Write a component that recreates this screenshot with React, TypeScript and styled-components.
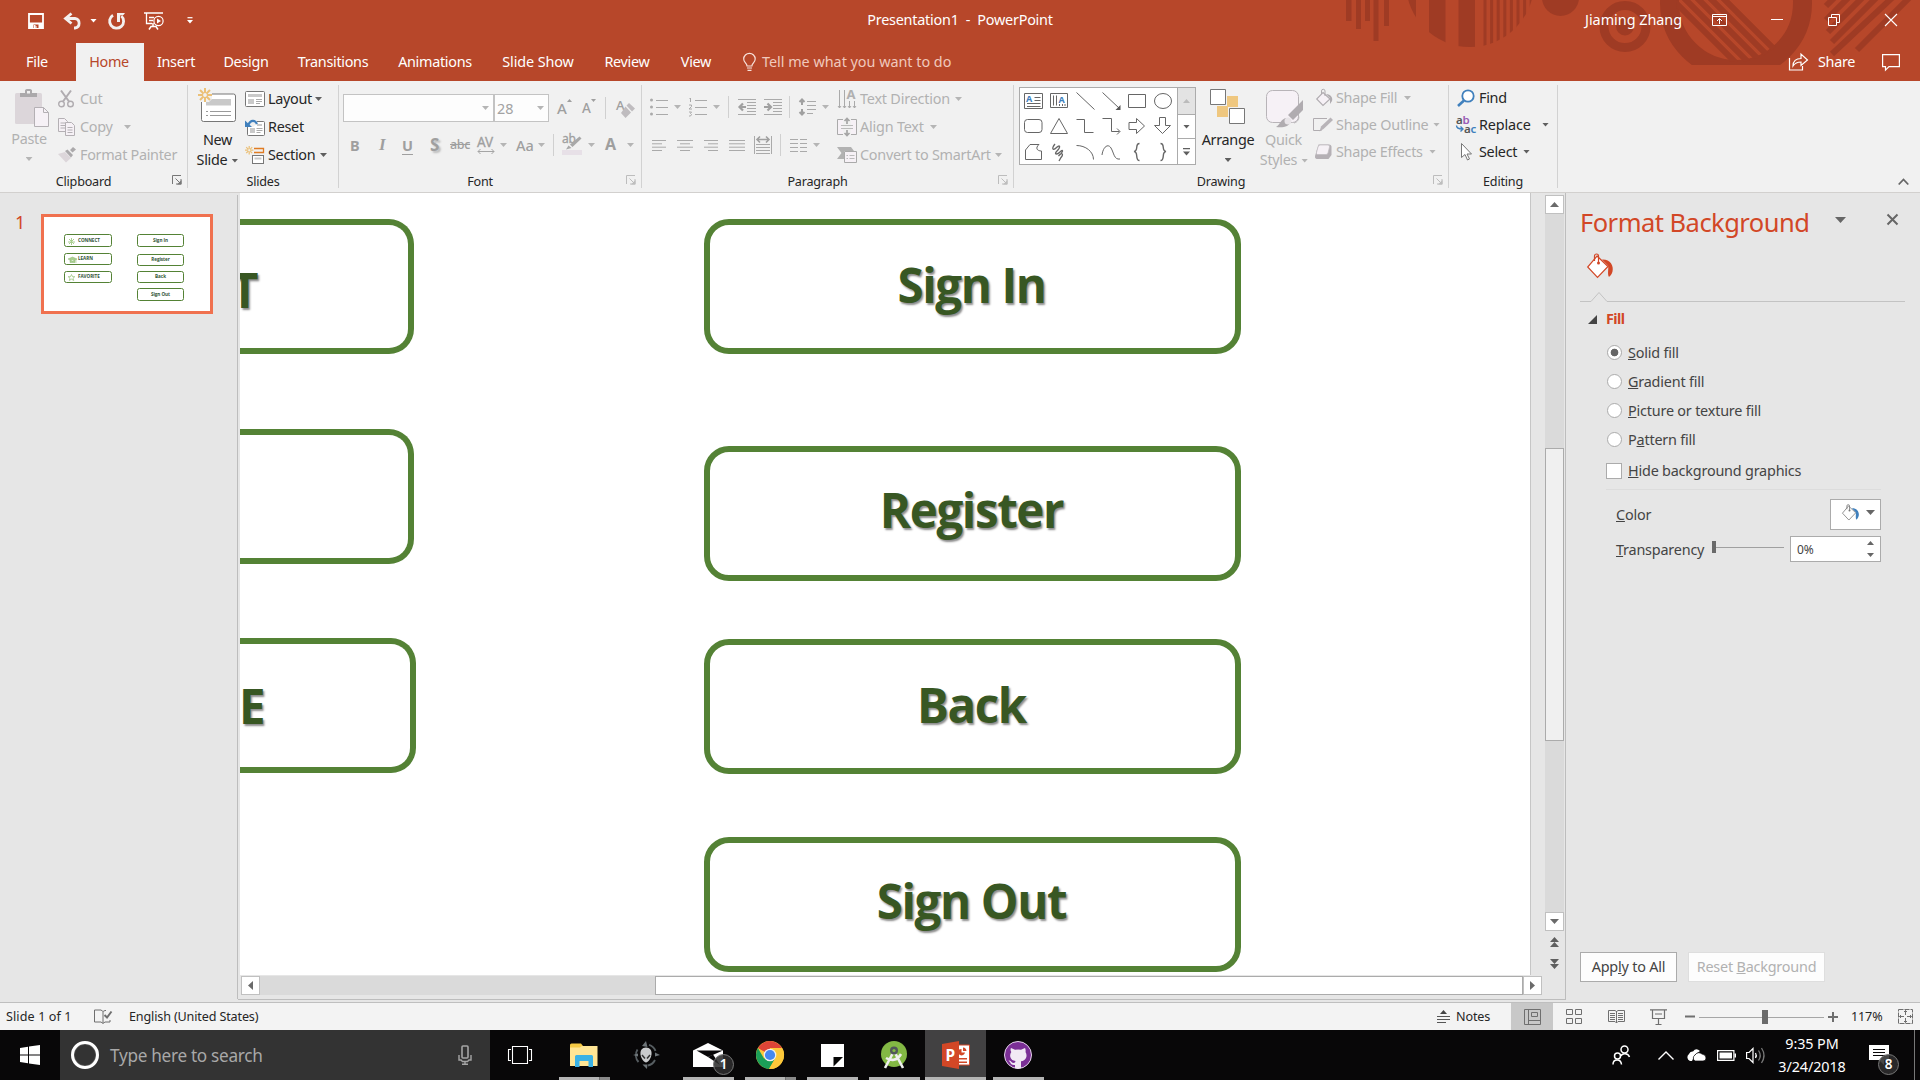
import React from "react";
import styled, { createGlobalStyle, css } from "styled-components";

const BRAND = "#B7472A";
const BRAND_DARK = "#9F3B24";
const GREEN = "#548235";
const OFF = "#b1b1b1";

const Global = createGlobalStyle`
  html, body { margin: 0; padding: 0; overflow: hidden; }
  * { box-sizing: border-box; }
  body { font-family: "Noto Sans", "Open Sans", sans-serif; font-size: 14.4px; letter-spacing: -0.3px; color: #262626; }
`;

const Window = styled.div`
  width: 1920px;
  height: 1080px;
  display: flex;
  flex-direction: column;
  background: #e6e6e6;
  overflow: hidden;
`;

const Icon = styled.svg<{ $ml?: number; $mt?: number }>`
  flex: none;
  display: block;
  overflow: visible;
  margin-left: ${(p) => p.$ml ?? 0}px;
  margin-top: ${(p) => p.$mt ?? 0}px;
  fill: none;
`;

const Caret = styled.i<{ $ml?: number; $off?: boolean; $mt?: number; $color?: string }>`
  flex: none;
  width: 7px;
  height: 4px;
  margin-left: ${(p) => p.$ml ?? 0}px;
  margin-top: ${(p) => p.$mt ?? 0}px;
  background: ${(p) => p.$color ?? (p.$off ? "#b5b5b5" : "#5f5f5f")};
  clip-path: polygon(0 0, 100% 0, 50% 100%);
`;

const Txt = styled.span<{ $w?: number; $ml?: number; $mt?: number; $ls?: number; $off?: boolean }>`
  flex: none;
  white-space: pre;
  line-height: 20px;
  ${(p) => p.$w !== undefined && css`width: ${p.$w}px;`}
  margin-left: ${(p) => p.$ml ?? 0}px;
  margin-top: ${(p) => p.$mt ?? 0}px;
  ${(p) => p.$ls !== undefined && css`letter-spacing: ${p.$ls}px;`}
  ${(p) => p.$off && css`color: ${OFF};`}
`;

/* ---------- Header ---------- */

const Header = styled.header`
  height: 81px;
  flex: none;
  background: ${BRAND};
  color: #fff;
  position: relative;
`;
const Decor = styled.svg`
  position: absolute;
  left: 1340px;
  top: 0;
`;
const TitleBar = styled.div`
  position: relative;
  height: 43px;
  padding-bottom: 4px;
  display: grid;
  grid-template-columns: 660px 600px 660px;
  align-items: center;
`;
const TitleSide = styled.div`
  display: flex;
  align-items: center;
  height: 39px;
`;
const TitleText = styled.div`
  text-align: center;
  white-space: pre;
  line-height: 20px;
  letter-spacing: -0.22px;
`;
const TabBar = styled.nav`
  position: relative;
  display: flex;
  height: 38px;
  align-items: center;
`;
const Tab = styled.div<{ $w: number; $active?: boolean; $ls?: number }>`
  width: ${(p) => p.$w}px;
  height: 38px;
  line-height: 37px;
  padding-right: 2px;
  text-align: center;
  white-space: nowrap;
  background: ${(p) => (p.$active ? "#f1f1f1" : "transparent")};
  color: ${(p) => (p.$active ? BRAND : "#fff")};
  letter-spacing: ${(p) => p.$ls ?? -0.3}px;
`;
const Tell = styled(Txt)`
  color: #f0c9bd;
  letter-spacing: -0.02px;
`;

function Decoration() {
  const thin = [0, 1, 2, 3, 4, 5, 6, 7];
  return (
    <Decor width="580" height="81" viewBox="1340 0 580 81">
      <defs>
        <clipPath id="disc"><circle cx="1470" cy="-17" r="64" /></clipPath>
        <clipPath id="ringBox"><rect x="1650" y="0" width="180" height="65" /></clipPath>
        <clipPath id="ringIn"><circle cx="1736" cy="2" r="60" /></clipPath>
      </defs>
      <g fill={BRAND_DARK}>
        <rect x="1346" y="0" width="5.5" height="21" />
        <rect x="1356" y="0" width="5" height="29" />
        <rect x="1365" y="0" width="5" height="21" />
        <rect x="1373.500" y="0" width="5" height="41" />
        <rect x="1384" y="0" width="5" height="26" />
        <g clipPath="url(#disc)">
          <rect x="1404" y="0" width="12" height="50" />
          <rect x="1429" y="0" width="16.500" height="50" />
          <rect x="1458.500" y="0" width="16.500" height="50" />
          {thin.map((i) => (
            <rect key={i} x={1483.5 + i * 6.6} y="0" width="3" height="50" />
          ))}
        </g>
        <circle cx="1560.500" cy="-2.500" r="18.500" />
        <circle cx="1625" cy="26.500" r="9" />
      </g>
      <circle cx="1625" cy="26.500" r="21" fill="none" stroke={BRAND_DARK} strokeWidth="9" />
      <g clipPath="url(#ringBox)">
        <circle cx="1736" cy="3" r="66.500" fill="none" stroke={BRAND_DARK} strokeWidth="19" />
        <g clipPath="url(#ringIn)" stroke={BRAND_DARK} strokeWidth="6">
          <path d="M1669 -4l80 80M1682 -4l80 80M1695 -4l80 80M1708 -4l80 80M1721 -4l80 80" />
        </g>
      </g>
      <g stroke={BRAND_DARK} strokeWidth="6">
        <path d="M1850 -4l-24 24M1864 -4l-36 36M1878 -4l-46 46M1894 -4l-62 58M1911 -4l-54 54M1836 -4l-10 10" />
      </g>
    </Decor>
  );
}

const TABS: [string, number, number][] = [
  ["Insert", 66, -0.3], ["Design", 74, -0.3], ["Transitions", 100, -0.3], ["Animations", 104, -0.3],
  ["Slide Show", 102, -0.1], ["Review", 76, -0.3], ["View", 62, -0.3],
];

function Top() {
  return (
    <Header>
      <Decoration />
      <TitleBar>
        <TitleSide>
          <Icon $ml={28} $mt={3} width="16" height="16" viewBox="0 0 16 16">
            <path d="M1 1h14v14H1z" stroke="#fff" strokeWidth="1.800" />
            <path d="M1 9.500h14V15H1z" fill="#fff" />
            <path d="M5.500 11.500h5V15h-2v-2h-1v2h-2z" fill={BRAND} />
            <path d="M6 12h1.500v3H6z" fill="#fff" />
          </Icon>
          <Icon $ml={20} $mt={3} width="18" height="16" viewBox="0 0 18 16">
            <path d="M7.500 0.500L1.500 5.500L7.500 10.500M2 5.500h9a4.800 4.800 0 0 1 0 9.500h-1" stroke="#f3f0ef" strokeWidth="2.800" />
          </Icon>
          <Caret $ml={8} $mt={2} $color="#fff" />
          <Icon $ml={11} $mt={3} width="18" height="16" viewBox="0 0 18 16">
            <path d="M5 2.200A7 7 0 1 0 13.300 3" stroke="#f3f0ef" strokeWidth="2.800" />
            <path d="M9 0h8l-1.500 2L12 2.500V9H9z" fill="#f3f0ef" />
          </Icon>
          <Icon $ml={18} $mt={3} width="20" height="18" viewBox="0 0 20 18">
            <path d="M0 1h19M2.500 1v10.500H8M5 5.500h5M5 8.500h4" stroke="#fff" strokeWidth="1.300" />
            <circle cx="14.500" cy="9" r="4.600" stroke="#fff" strokeWidth="1.200" />
            <path d="M13 6.500l4 2.500l-4 2.500z" fill="#fff" />
            <path d="M5 17.500l2-3h5l2 3M9 11v4" stroke="#fff" strokeWidth="1.500" />
          </Icon>
          <Icon $ml={23} $mt={1} width="6" height="7" viewBox="0 0 6 7">
            <path d="M0.500 0.700h5" stroke="#fff" strokeWidth="1.200" />
            <path d="M0 3h6l-3 3.500z" fill="#fff" />
          </Icon>
        </TitleSide>
        <TitleText>Presentation1  -  PowerPoint</TitleText>
        <TitleSide>
          <Txt $ml={325} $w={120} $ls={-0.02}>Jiaming Zhang</Txt>
          <Icon $ml={7} width="15" height="12" viewBox="0 0 15 12">
            <path d="M0.500 0.500h14v11H0.500zM0.500 2.500h14M7.500 10V4.500M5 7l2.500-2.500L10 7" stroke="#fff" />
          </Icon>
          <Icon $ml={44} width="12" height="12" viewBox="0 0 12 12"><path d="M0 5.500h12" stroke="#fff" /></Icon>
          <Icon $ml={45} width="12" height="12" viewBox="0 0 12 12">
            <path d="M0.500 3.500h8v8h-8zM3.500 3.500v-3h8v8h-3" stroke="#fff" />
          </Icon>
          <Icon $ml={45} width="12" height="12" viewBox="0 0 12 12">
            <path d="M0 0l12 12M12 0L0 12" stroke="#fff" strokeWidth="1.100" />
          </Icon>
        </TitleSide>
      </TitleBar>
      <TabBar>
        <Tab $w={76}>File</Tab>
        <Tab $w={68} $active>Home</Tab>
        {TABS.map(([t, w, ls]) => (
          <Tab key={t} $w={w} $ls={ls}>{t}</Tab>
        ))}
        <Icon $ml={15} width="13" height="18" viewBox="0 0 13 18">
          <path d="M4 13c0-3-3.300-3.500-3.300-7A5.700 5.600 0 0 1 12.200 6c0 3.500-3.300 4-3.300 7zM4 15h5M4.500 17.300h4" stroke="#f8e2db" strokeWidth="1.200" />
        </Icon>
        <Tell $ml={6} $w={1027}>Tell me what you want to do</Tell>
        <Icon width="20" height="18" viewBox="0 0 20 18">
          <path d="M0.500 5v12h13v-4" stroke="#fff" strokeWidth="1.200" />
          <path d="M4 13c0-5 3-7.500 8-7.500V1l6.500 6l-6.500 5.500V9C8 9 6 10 4 13z" stroke="#fff" strokeWidth="1.200" />
        </Icon>
        <Txt $ml={9} $w={64}>Share</Txt>
        <Icon width="18" height="17" viewBox="0 0 18 17">
          <path d="M0.600 0.600h16.800v12H7l-3.500 3.500v-3.500H0.600z" stroke="#fff" strokeWidth="1.200" />
        </Icon>
      </TabBar>
    </Header>
  );
}

/* ---------- Ribbon ---------- */

const RibbonBar = styled.section`
  height: 112px;
  flex: none;
  display: flex;
  background: #f1f1f1;
  border-bottom: 1px solid #d2d0ce;
`;
const GroupBox = styled.div<{ $w: number }>`
  width: ${(p) => p.$w}px;
  height: 103px;
  margin-top: 4px;
  border-right: 1px solid #d2d2d2;
  display: flex;
  flex-direction: column;
`;
const GroupBody = styled.div`
  height: 88px;
  display: flex;
`;
const GroupFoot = styled.div<{ $launch: boolean }>`
  height: 18px;
  display: flex;
  align-items: center;
  font-size: 12.6px;
  letter-spacing: -0.2px;
  padding-right: ${(p) => (p.$launch ? 5 : 0)}px;
`;
const GroupName = styled.span`
  flex: 1;
  text-align: center;
  line-height: 18px;
  padding-top: 5px;
`;
const Col = styled.div<{ $ml?: number; $w?: number; $pt?: number }>`
  flex: none;
  margin-left: ${(p) => p.$ml ?? 0}px;
  padding-top: ${(p) => p.$pt ?? 0}px;
  ${(p) => p.$w !== undefined && css`width: ${p.$w}px;`}
  display: flex;
  flex-direction: column;
`;
const Big = styled(Col)<{ $off?: boolean }>`
  align-items: center;
  line-height: 20px;
  white-space: nowrap;
  ${(p) => p.$off && css`color: ${OFF};`}
`;
const Row = styled.div<{ $h?: number }>`
  height: ${(p) => p.$h ?? 28}px;
  display: flex;
  align-items: center;
`;
const IconCell = styled.div<{ $w: number }>`
  width: ${(p) => p.$w}px;
  flex: none;
  display: flex;
`;
const VLine = styled.i<{ $ml: number }>`
  width: 1px;
  height: 22px;
  flex: none;
  background: #d0d0d0;
  margin-left: ${(p) => p.$ml}px;
`;
const Box = styled.div<{ $w: number }>`
  width: ${(p) => p.$w}px;
  height: 28px;
  flex: none;
  border: 1px solid #c3c3c3;
  background: #fdfdfd;
  display: flex;
  align-items: center;
  justify-content: space-between;
  padding: 0 4px 0 2px;
  letter-spacing: 0;
  color: #a3a3a3;
`;
const Glyph = styled.span<{ $ml: number; $w: number; $mt?: number; $size?: number; $bold?: boolean; $italic?: boolean; $serif?: boolean; $line?: string; $shadow?: boolean; $ls?: number }>`
  flex: none;
  margin-left: ${(p) => p.$ml}px;
  margin-top: ${(p) => p.$mt ?? 0}px;
  width: ${(p) => p.$w}px;
  color: #9f9f9f;
  line-height: 20px;
  white-space: nowrap;
  font-size: ${(p) => p.$size ?? 15}px;
  font-weight: ${(p) => (p.$bold ? 700 : 500)};
  font-style: ${(p) => (p.$italic ? "italic" : "normal")};
  font-family: ${(p) => (p.$serif ? '"Liberation Serif", serif' : "inherit")};
  text-decoration: ${(p) => p.$line ?? "none"};
  text-underline-offset: 3px;
  text-shadow: ${(p) => (p.$shadow ? "2px 2px 2px #bbb" : "none")};
  letter-spacing: ${(p) => p.$ls ?? 0}px;
`;

function Group({ name, w, launch = true, on = false, children }: { name: string; w: number; launch?: boolean; on?: boolean; children: React.ReactNode }) {
  return (
    <GroupBox $w={w}>
      <GroupBody>{children}</GroupBody>
      <GroupFoot $launch={launch}>
        <GroupName>{name}</GroupName>
        {launch && (
          <Icon width="10" height="10" $ml={5} $mt={1} viewBox="0 0 10 10">
            <path d="M0.500 9V0.500H9M3.500 3.500L8 8M9 4v5H4" stroke={on ? "#777" : "#bdbdbd"} />
            <path d="M9.500 5v4.500H5z" fill={on ? "#777" : "#bdbdbd"} />
          </Icon>
        )}
      </GroupFoot>
    </GroupBox>
  );
}

function Clipboard() {
  return (
    <Group name="Clipboard" w={188} on>
      <Big $w={58} $off $pt={4}>
        <Icon $ml={6} width="34" height="38" viewBox="0 0 34 38">
          <rect y="4" width="27" height="31" rx="1.500" fill="#dcd6da" />
          <path d="M5 8V4h5V2.500A2 2 0 0 1 12 0h3a2 2 0 0 1 2 2.500V4h5v4z" fill="#aba9ab" />
          <rect x="12" y="2" width="3" height="2.500" fill="#f1f1f1" />
          <path d="M19.500 18.500h9l5 5V37.500h-14z" fill="#f6f1f6" stroke="#b4b0b4" />
          <path d="M28.500 18.500v5h5" stroke="#b4b0b4" />
        </Icon>
        <Txt $mt={2}>Paste</Txt>
        <Caret $off $mt={8} />
      </Big>
      <Col>
        <Row>
          <IconCell $w={22}>
            <Icon width="16" height="18" viewBox="0 0 16 18" stroke="#b0acb0">
              <path d="M3 0.500l8 11M13 0.500l-8 11" strokeWidth="2" />
              <circle cx="3.500" cy="14" r="2.800" strokeWidth="1.400" /><circle cx="12.500" cy="14" r="2.800" strokeWidth="1.400" />
            </Icon>
          </IconCell>
          <Txt $off>Cut</Txt>
        </Row>
        <Row>
          <IconCell $w={22}>
            <Icon width="17" height="18" viewBox="0 0 17 18" stroke="#b4b0b4">
              <path d="M0.500 0.500h6l3 3v10h-9z" fill="#f6f1f6" /><path d="M2.500 5h5M2.500 7.500h5M2.500 10h5" />
              <path d="M7.500 4.500h6l3 3v10h-9z" fill="#f6f1f6" /><path d="M9.500 9.500h5M9.500 12h5M9.500 14.500h5" />
            </Icon>
          </IconCell>
          <Txt $off $w={44}>Copy</Txt>
          <Caret $off />
        </Row>
        <Row>
          <IconCell $w={22}>
            <Icon width="18" height="16" viewBox="0 0 18 16">
              <path d="M0 7l7-2l6 6l-5 4.500z" fill="#dcd6da" />
              <path d="M7 4l2.500-1.500l5.500 5.500l-2 2.500zM12 3l3-3l3 2.500l-3.500 3z" fill="#aba9ab" />
            </Icon>
          </IconCell>
          <Txt $off>Format Painter</Txt>
        </Row>
      </Col>
    </Group>
  );
}

const Burst = ({ s }: { s: number }) => (
  <g transform={`scale(${s})`} stroke="#EBC077" strokeWidth="2">
    <path d="M7 0v4.500M7 9.500V14M0 7h4.500M9.500 7H14M2 2l3.200 3.200M8.800 8.800L12 12M12 2L8.800 5.200M5.200 8.800L2 12" />
    <circle cx="7" cy="7" r="2.500" strokeWidth="1.200" />
  </g>
);

function Slides() {
  return (
    <Group name="Slides" w={151} launch={false}>
      <Big $w={57} $pt={3}>
        <Icon width="38" height="35" viewBox="0 0 38 35">
          <rect x="3.500" y="6" width="34" height="27.500" rx="2" fill="#fff" stroke="#777" />
          <path d="M8 11h25v6.500H8z" fill="#c9c9c9" />
          <path d="M8 23.500h2M12 23.500h21M8 27.500h2M12 27.500h21" stroke="#9a9a9a" />
          <path d="M0 0h14v11l-3 3H0z" fill="#f1f1f1" />
          <Burst s={1} />
        </Icon>
        <Txt $ml={2} $mt={7}>New</Txt>
        <Row $h={20}>
          <Txt $ml={2}>Slide</Txt>
          <Caret $ml={4} $mt={1} />
        </Row>
      </Big>
      <Col>
        <Row>
          <IconCell $w={23}>
            <Icon width="20" height="16" viewBox="0 0 20 16">
              <rect x="0.500" y="0.500" width="19" height="15" rx="1" fill="#fff" stroke="#777" />
              <path d="M3 3h14v3H3zM3 8h6v5H3z" fill="#c9c9c9" /><path d="M11 8.500h6M11 10.500h6M11 12.500h4" stroke="#aaa" />
            </Icon>
          </IconCell>
          <Txt $w={46}>Layout</Txt><Caret $ml={1} />
        </Row>
        <Row>
          <IconCell $w={23}>
            <Icon width="20" height="17" viewBox="0 0 20 17">
              <rect x="2.500" y="2.500" width="17" height="14" rx="1" fill="#fff" stroke="#777" />
              <path d="M12 5h5v2h-5zM5 9h5v5H5z" fill="#c9c9c9" /><path d="M11.500 9.500h6M11.500 11.500h6M11.500 13.500h4" stroke="#aaa" />
              <path d="M0 0h12v5L8 8H0z" fill="#f1f1f1" />
              <path d="M3.500 5.500C5.500 1 10 0.500 12 5" stroke="#4080bd" strokeWidth="2.200" /><path d="M0 1.500V8h7z" fill="#4080bd" />
            </Icon>
          </IconCell>
          <Txt>Reset</Txt>
        </Row>
        <Row>
          <IconCell $w={23}>
            <Icon width="20" height="18" viewBox="0 0 20 18">
              <Burst s={0.6} />
              <path d="M9 2.500h9.500v4H9" stroke="#e07b22" strokeWidth="1.300" />
              <rect x="7.500" y="9.500" width="11" height="8" fill="#fff" stroke="#777" /><path d="M9.500 11.500h7v2h-7z" fill="#c9c9c9" />
            </Icon>
          </IconCell>
          <Txt $w={51}>Section</Txt><Caret $ml={1} />
        </Row>
      </Col>
    </Group>
  );
}

const Lines = ({ d, w, h = 18, ml, children }: { d: string; w: number; h?: number; ml: number; children?: React.ReactNode }) => (
  <Icon $ml={ml} width={w} height={h} viewBox={`0 0 ${w} ${h}`}>
    <path d={d} stroke="#aaa" />
    {children}
  </Icon>
);

function FontGroup() {
  return (
    <Group name="Font" w={303}>
      <Col $ml={4} $pt={9}>
        <Row $h={28}>
          <Box $w={151}><span /><Caret $off /></Box>
          <Box $w={55}>28<Caret $off /></Box>
          <Glyph $ml={8} $w={10} $size={15}>A</Glyph>
          <Icon width="5" height="3" $mt={-15} viewBox="0 0 5 3"><path d="M0 3h5l-2.500-3z" fill="#9f9f9f" /></Icon>
          <Glyph $ml={10} $w={9} $size={13.5}>A</Glyph>
          <Icon width="5" height="3" $mt={-15} viewBox="0 0 5 3"><path d="M0 0h5l-2.500 3z" fill="#9f9f9f" /></Icon>
          <VLine $ml={9} />
          <Glyph $ml={10} $w={8} $mt={-7} $size={13}>A</Glyph>
          <Icon width="17" height="15" $ml={-5} $mt={4} viewBox="0 0 17 15">
            <path d="M8.500 2.500L11 0l6 5.500l-3 3zM7.500 3.500L13 9.500L7.500 15L3 10z" fill="#bfbcbf" transform="translate(-1 0)" />
          </Icon>
        </Row>
        <Row $h={46}>
          <Glyph $ml={7} $w={27} $bold $size={14.5}>B</Glyph>
          <Glyph $ml={2} $w={22} $bold $italic $serif $size={17}>I</Glyph>
          <Glyph $ml={1} $w={28} $bold $line="underline" $size={14.5}>U</Glyph>
          <Glyph $ml={0} $w={20} $bold $shadow $size={17}>S</Glyph>
          <Glyph $ml={0} $w={27} $line="line-through" $size={12.5} $ls={-0.3}>abc</Glyph>
          <Icon width="18" height="19" viewBox="0 0 18 19">
            <path d="M1 15.500h16M3.500 13L1 15.500L3.500 18M14.500 13L17 15.500L14.500 18" stroke="#a5a5a5" />
            <text x="0" y="11" fontSize="13.500" letterSpacing="0" fill="#9f9f9f" stroke="#9f9f9f" strokeWidth=".3">AV</text>
          </Icon>
          <Caret $off $ml={5} />
          <Glyph $ml={9} $w={22} $size={14.5}>Aa</Glyph>
          <Caret $off />
          <VLine $ml={8} />
          <Icon $ml={8} width="20" height="20" viewBox="0 0 20 20">
            <rect y="15" width="20" height="5" fill="#e7e0e7" />
            <text x="0" y="8" fontSize="12" fill="#9f9f9f" stroke="#9f9f9f" strokeWidth=".3">ab</text>
            <path d="M4 14.500l2.500-4l3 2.500zM8 9.500L17.500 1.500l2 2L10.500 12z" fill="#a8a8a8" />
          </Icon>
          <Caret $off $ml={6} />
          <Glyph $ml={10} $w={22} $mt={-3} $bold $size={16}>A</Glyph>
          <Caret $off />
        </Row>
      </Col>
    </Group>
  );
}

function Paragraph() {
  return (
    <Group name="Paragraph" w={372}>
      <Col $ml={8} $w={188} $pt={8}>
        <Row $h={28}>
          <Lines ml={0} w={18} d="M6 2.500h12M6 9.500h12M6 16.500h12">
            <g fill="#aaa"><circle cx="1.500" cy="2" r="1.500" /><circle cx="1.500" cy="9" r="1.500" /><circle cx="1.500" cy="16" r="1.500" /></g>
          </Lines>
          <Caret $off $ml={6} />
          <Lines ml={8} w={18} d="M6 2.500h12M6 9.500h12M6 16.500h12M0.500 1l1-1v4M0 7h2.500v1.500L0 11h3M0 14h2.500l-1 1.500l1 1l-1 1.500H0" />
          <Caret $off $ml={6} />
          <VLine $ml={8} />
          <Lines ml={9} w={18} h={16} d="M0 0.500h18M0 15.500h18M9 3.500h9M9 6.500h9M9 9.500h9M9 12.500h9">
            <path d="M8 8H2M5 4.500L1.500 8L5 11.500" stroke="#a0a0a0" strokeWidth="2.200" />
          </Lines>
          <Lines ml={8} w={18} h={16} d="M0 0.500h18M0 15.500h18M9 3.500h9M9 6.500h9M9 9.500h9M9 12.500h9">
            <path d="M0 8H6M3.500 4.500L7 8L3.500 11.500" stroke="#a0a0a0" strokeWidth="2.200" />
          </Lines>
          <VLine $ml={7} />
          <Lines ml={9} w={17} d="M8 3.500h9M8 7.500h9M8 11.500h9M8 15.500h6">
            <path d="M3 1v6M0.500 4L3 1.500L5.500 4M3 11v6M0.500 14L3 16.500L5.500 14" stroke="#a0a0a0" strokeWidth="2" />
          </Lines>
          <Caret $off $ml={6} />
        </Row>
        <Row $h={48}>
          <Lines ml={2} w={14} h={11} d="M0 0.500h14M0 3.800h10M0 7.200h14M0 10.500h10" />
          <Lines ml={11} w={16} h={11} d="M0 0.500h16M3 3.800h10M0 7.200h16M3 10.500h10" />
          <Lines ml={11} w={14} h={11} d="M0 0.500h14M4 3.800h10M0 7.200h14M4 10.500h10" />
          <Lines ml={11} w={16} h={13} d="M0 1.500h16M0 4.800h16M0 8.200h16M0 11.500h16" />
          <Lines ml={9} w={18} h={18} d="M0.500 0v18M17.500 0v18M2 8.500h14M2 11.500h14M2 14.500h14M2 17.500h14">
            <path d="M3 3.500h12M6 0.500L3 3.500L6 6.500M12 0.500L15 3.500L12 6.500" stroke="#a0a0a0" strokeWidth="1.600" />
          </Lines>
          <VLine $ml={8} />
          <Lines ml={9} w={17} h={13} d="M0 0.500h8M0 4.500h8M0 8.500h8M0 12.500h8M10 0.500h7M10 4.500h7M10 8.500h7M10 12.500h7" />
          <Caret $off $ml={6} />
        </Row>
      </Col>
      <Col>
        <Row>
          <IconCell $w={22}>
            <Icon width="18" height="20" viewBox="0 0 18 20">
              <path d="M1.500 1v18M6.500 1v18M11.500 12v7M16.500 12v7M0 17l1.500 2L3 17M5 17l1.500 2L8 17M10 17l1.500 2l1.500-2M15 17l1.500 2l1.500-2" stroke="#aaa" />
              <text x="8.500" y="10" fontSize="13" fontWeight="700" fill="#b0b0b0">A</text>
            </Icon>
          </IconCell>
          <Txt $off $w={93} $ls={-0.2}>Text Direction</Txt><Caret $off $ml={2} />
        </Row>
        <Row>
          <IconCell $w={22}>
            <Icon width="20" height="18" $ml={-1} viewBox="0 0 20 18">
              <path d="M6 1.500H0.500v15H6M14 1.500h5.500v15H14" fill="#f6f1f6" stroke="#aaa" />
              <path d="M4 7.500h12M4 10.500h12" stroke="#bbb" /><path d="M10 0v6M7.500 3L10 0.500L12.500 3M10 18v-6M7.500 15l2.500 2.500L12.500 15" stroke="#a5a5a5" strokeWidth="1.700" />
            </Icon>
          </IconCell>
          <Txt $off $w={69} $ls={-0.2}>Align Text</Txt><Caret $off $ml={1} />
        </Row>
        <Row>
          <IconCell $w={22}>
            <Icon width="20" height="16" $ml={-1} viewBox="0 0 20 16">
              <path d="M0 0h14l3 4H7v8H0l4.500-6z" fill="#b2b2b2" />
              <path d="M7.500 4.500h12v11h-12z" fill="#f6f1f6" stroke="#aaa" /><path d="M9.500 8.500h1.500M12.500 8.500h5M9.500 11.500h1.500M12.500 11.500h5" stroke="#bbb" />
            </Icon>
          </IconCell>
          <Txt $off $w={134} $ls={-0.25}>Convert to SmartArt</Txt><Caret $off $ml={1} />
        </Row>
      </Col>
    </Group>
  );
}

const Gallery = styled.div`
  flex: none;
  width: 177px;
  height: 78px;
  margin: 2px 0 0 5px;
  border: 1px solid #ababab;
  background: #fff;
  display: grid;
  grid-template-columns: 157px 18px;
`;
const Shapes = styled.div`
  display: grid;
  grid-template-columns: repeat(6, 26px);
  grid-template-rows: 25px 26px 25px;
  place-items: center;
`;
const Scroller = styled.div`
  display: grid;
  grid-template-rows: 26px 24px 26px;
  border-left: 1px solid #ababab;
`;
const ScrollCell = styled.div<{ $dim?: boolean }>`
  display: grid;
  place-items: center;
  background: ${(p) => (p.$dim ? "#e3e3e3" : "#fff")};
  & + & { border-top: 1px solid #ababab; }
`;

const SHAPES: React.ReactNode[] = [
  <><path d="M0.500 1.500h18v15h-18zM10.500 5.500h6M10.500 8.500h6M3 11.500h13.500M3 14.500h13.500" /><text x="2" y="10" fontSize="9" fontWeight="700" stroke="none" fill="#4080bd">A</text></>,
  <><path d="M0.500 1.500h17v14h-17zM3.500 3.500v10M6.500 3.500v10M9.500 12v2M12.500 12v2M15 12v2" /><text x="8.500" y="10.500" fontSize="9" fontWeight="700" stroke="none" fill="#4080bd">A</text></>,
  <path d="M0.500 0.500l18 17" />,
  <><path d="M0.500 0.500l17 16" /><path d="M18.500 18v-5l-5 5z" fill="#555" stroke="none" /></>,
  <path d="M0.500 2.500h17v13h-17z" />,
  <ellipse cx="9" cy="9" rx="8.500" ry="7.500" />,
  <rect x="0.500" y="2.500" width="17.500" height="13" rx="3" />,
  <path d="M9 1.500l8.500 15H0.500z" />,
  <path d="M0.500 2.500h8v13h9" />,
  <path d="M0.500 1.500h9v13h8M15 11.500l3 3l-3 3" />,
  <path d="M1 5.500h7.500V1.500l8 7.500l-8 7.500v-4H1z" />,
  <path d="M5.500 0.500h6v8h5L8.500 16.500L0.500 8.500h5z" />,
  <path d="M1.500 16.500V7L6 1.500h9c-4 3.500-2 6.500 2.500 6.500v8.500z" />,
  <path d="M5 1C1 6 3 8 6.500 4.500C10 1 11 4 7 8C3.500 11.500 7 12 10 9C14 5 13 10 8.500 13C12 9 14 11 11 14.500L9 18" strokeWidth="1.300" />,
  <path d="M0.500 2.500c9 0 17 6 17 14" />,
  <path d="M0 12C1 4 6 0 9 5s3 12 9 11" />,
  <path d="M11.500 0.500C6.500 0.500 11 8 6 8.500C11 9 6.500 17.500 11.500 17.500" strokeWidth="1.400" />,
  <path d="M6.500 0.500c5 0 0.500 7.500 5.500 8c-5 0.500-0.500 9-5.500 9" strokeWidth="1.400" />,
];

function Bucket({ color, spill, size }: { color: string; spill: string; size: number }) {
  return (
    <Icon width={size} height={size} viewBox="0 0 26 26">
      <path d="M10 3L21 13.500L10.500 24.500L0.700 14z" fill="#fff" stroke={color} strokeWidth="1.200" />
      <path d="M7.500 8V3a2 2 0 0 1 4 0v7" stroke={color} strokeWidth="1.200" />
      <circle cx="11.500" cy="10" r="1.500" fill={color} />
      <path d="M15 6.500c8-0.500 12 6 10.500 12c-0.500 3-3 5-3.500 5.500c-2-3 0-9-1-11.500z" fill={spill} />
    </Icon>
  );
}

function Drawing() {
  return (
    <Group name="Drawing" w={435}>
      <Gallery>
        <Shapes>
          {SHAPES.map((s, i) => (
            <Icon key={i} width="18" height="18" viewBox="0 0 18 18" stroke="#666">{s}</Icon>
          ))}
        </Shapes>
        <Scroller>
          <ScrollCell $dim><Icon width="7" height="4" viewBox="0 0 7 4"><path d="M0 4h7L3.500 0z" fill="#bbb" /></Icon></ScrollCell>
          <ScrollCell><Caret /></ScrollCell>
          <ScrollCell><Icon width="7" height="8" viewBox="0 0 7 8"><path d="M0 0h7v1.200H0zM0 3.500h7L3.500 7.500z" fill="#5f5f5f" /></Icon></ScrollCell>
        </Scroller>
      </Gallery>
      <Big $w={64} $pt={4}>
        <Icon width="36" height="36" viewBox="0 0 36 36">
          <path d="M17 7h11v11H17zM7 17h11v11H7z" fill="#EFC77F" />
          <path d="M0.500 0.500h15v15h-15zM19.500 19.500h15v15h-15z" fill="#fff" stroke="#777" />
        </Icon>
        <Txt $mt={5}>Arrange</Txt>
        <Caret $mt={8} />
      </Big>
      <Big $w={52} $ml={-3} $off $pt={5}>
        <Icon width="38" height="38" $ml={4} viewBox="0 0 38 38">
          <rect x="0.500" y="0.500" width="32" height="32" rx="6" fill="#f6f1f6" stroke="#b8b4b8" />
          <path d="M37 10v10L27 30l-5-5zM10 37c4-2 5-9 11-9c5 0 5 5 0 8c-3 1.500-7 1.500-11 1z" fill="#b0acb0" />
          <circle cx="22" cy="31" r="3.500" fill="#e8e4e8" />
          <path d="M32 25c2 3 0 7-4 8" stroke="#b8b4b8" />
        </Icon>
        <Txt $ml={1} $mt={2}>Quick</Txt>
        <Row $h={20}><Txt $ml={2}>Styles</Txt><Caret $off $ml={4} $mt={1} /></Row>
      </Big>
      <Col $ml={5} $pt={-2}>
        <Row $h={26}>
          <IconCell $w={22}>
            <Icon width="17" height="18" $ml={2} viewBox="0 0 17 18">
              <path d="M7 3.500l7 6.500l-7 6.500L0.700 10z" fill="#f6f1f6" stroke="#b0acb0" strokeWidth="1.100" />
              <path d="M5.500 5V2a1.500 1.500 0 0 1 3.500 0v5" stroke="#b0acb0" /><path d="M10 5c5 0 7 4 6 7l-2 3V9z" fill="#b0acb0" />
            </Icon>
          </IconCell>
          <Txt $off $w={66}>Shape Fill</Txt><Caret $off $ml={2} />
        </Row>
        <Row $h={27}>
          <IconCell $w={22}>
            <Icon width="20" height="16" $ml={-1} viewBox="0 0 20 16">
              <path d="M14 1.500H0.500v12h8" stroke="#b0acb0" /><path d="M6.500 14.500l1.500-5L17.500 0.500l2.500 2.500l-9.500 9z" fill="#b8b4b8" />
            </Icon>
          </IconCell>
          <Txt $off $w={95} $ls={-0.22}>Shape Outline</Txt><Caret $off $ml={2} />
        </Row>
        <Row $h={27}>
          <IconCell $w={22}>
            <Icon width="18" height="16" viewBox="0 0 18 16">
              <path d="M4.500 0.500h10.500q2.500 0 2.500 2.500v8l-3 4H2.500q-2-0.500-1.500-3z" fill="#b5b0b5" />
              <path d="M6 1h8q2 0 1.500 2l-1.500 6q-0.500 1.500-2 1.500H3.500q-1.500 0-1-2L4 3q0.500-2 2-2z" fill="#f6f1f6" stroke="#c0bcc0" strokeWidth=".7" />
            </Icon>
          </IconCell>
          <Txt $off $w={91}>Shape Effects</Txt><Caret $off $ml={2} />
        </Row>
      </Col>
    </Group>
  );
}

function Editing() {
  return (
    <Group name="Editing" w={109} launch={false}>
      <Col $ml={8}>
        <Row $h={26}>
          <IconCell $w={22}>
            <Icon width="18" height="18" viewBox="0 0 18 18" stroke="#4080bd">
              <circle cx="11" cy="7" r="5.700" fill="#fff" strokeWidth="1.800" /><path d="M7 11.500L1 17" strokeWidth="2.600" />
            </Icon>
          </IconCell>
          <Txt>Find</Txt>
        </Row>
        <Row $h={27}>
          <IconCell $w={22}>
            <Icon width="20" height="18" $ml={-1} viewBox="0 0 20 18" fontSize="11.500" fontWeight="600" letterSpacing="-0.3">
              <text x="0" y="8" fill="#555">a<tspan fill="#9a5bb5">b</tspan></text>
              <text x="8" y="17" fill="#555">a<tspan fill="#4080bd">c</tspan></text>
              <path d="M0.500 9.500c0 3 2 3.500 6 3.500M4.500 10.500L7 13l-2.500 2.500" stroke="#4080bd" strokeWidth="1.400" />
            </Icon>
          </IconCell>
          <Txt $w={58} $ls={-0.15}>Replace</Txt><Caret $ml={5} />
        </Row>
        <Row $h={27}>
          <IconCell $w={22}>
            <Icon width="12" height="18" $ml={4} viewBox="0 0 12 18">
              <path d="M0.500 0.500v14l3.500-3l2.500 5.500l2-1l-2.500-5h4.500z" fill="#fff" stroke="#777" />
            </Icon>
          </IconCell>
          <Txt $w={43}>Select</Txt><Caret $ml={1} />
        </Row>
      </Col>
    </Group>
  );
}

const CollapseCell = styled.div`
  flex: 1;
  display: flex;
  justify-content: flex-end;
  align-items: flex-end;
  padding: 0 11px 7px 0;
`;

/* ---------- Workspace ---------- */

const Work = styled.main`
  height: 810px;
  flex: none;
  display: flex;
  border-bottom: 1px solid #bfbfbf;
`;
const ThumbPane = styled.aside`
  width: 238px;
  flex: none;
  margin-top: 2px;
  height: 804px;
  border-right: 1px solid #bdbdbd;
  display: flex;
  align-items: flex-start;
  padding: 19px 0 0 15px;
`;
const ThumbNo = styled.span`
  width: 26px;
  font-size: 18px;
  line-height: 16px;
  color: #d24726;
`;
const Thumb = styled.div`
  width: 172px;
  height: 100px;
  border: 3px solid #f0714f;
  background: #fff;
  position: relative;
`;
const MiniBtn = styled.div<{ $x: number; $y: number; $w: number; $h: number; $left: boolean }>`
  position: absolute;
  left: ${(p) => p.$x - 44}px;
  top: ${(p) => p.$y - 217}px;
  width: ${(p) => p.$w}px;
  height: ${(p) => p.$h}px;
  border: 1px solid ${GREEN};
  border-radius: 2.5px;
  display: flex;
  align-items: center;
  justify-content: ${(p) => (p.$left ? "flex-start" : "center")};
  padding: 0 0 1px ${(p) => (p.$left ? 3 : 0)}px;
  gap: 2px;
  font: 700 4.6px/5px "Open Sans", sans-serif;
  letter-spacing: -0.05px;
  color: #2f5535;
`;
const Center = styled.section`
  width: 1328px;
  flex: none;
  display: grid;
  grid-template-columns: 1305px 23px;
  grid-template-rows: 782px 24px;
  height: 807px;
  border-right: 1px solid #bdbdbd;
  border-bottom: 1px solid #bdbdbd;
`;
const Canvas = styled.div`
  position: relative;
  width: 1291px;
  margin-left: 2px;
  background: #fff;
  border-right: 1px solid #c6c6c6;
  overflow: hidden;
`;
const ShapeBtn = styled.div<{ $x: number; $y: number; $w?: number; $lift?: number }>`
  position: absolute;
  left: ${(p) => p.$x - 240}px;
  top: ${(p) => p.$y - 193}px;
  width: ${(p) => p.$w ?? 537}px;
  height: 135px;
  border: 6px solid ${GREEN};
  border-radius: 25px;
  display: flex;
  align-items: center;
  justify-content: center;
  padding-bottom: ${(p) => 4 + 2 * (p.$lift ?? 0)}px;
  padding-right: 2px;
  color: #385723;
  font: 700 47.5px/60px "Open Sans", sans-serif;
  letter-spacing: -1.4px;
  white-space: nowrap;
  text-shadow: 1.5px 1.5px 2px rgba(0, 0, 0, 0.45);
`;
const CutBtn = styled(ShapeBtn)`
  border-left: 0;
  border-radius: 0 25px 25px 0;
  justify-content: flex-start;
`;
const CutLetter = styled.span<{ $ml: number }>`
  margin-left: ${(p) => p.$ml}px;
  padding-top: 10px;
`;
const VBar = styled.div`
  display: flex;
  flex-direction: column;
  grid-row: 1 / 3;
  grid-column: 2;
  margin-left: 2px;
  padding-top: 2px;
  width: 19px;
`;
const ArrowBtn = styled.div`
  width: 19px;
  height: 19px;
  flex: none;
  border: 1px solid #c0c0c0;
  background: #fff;
  display: grid;
  place-items: center;
`;
const VTrack = styled.div`
  height: 698px;
  flex: none;
  background: #dadada;
  padding-top: 234px;
`;
const VThumb = styled.div`
  height: 293px;
  border: 1px solid #ababab;
  background: #f0f0f0;
`;
const PageArrows = styled.div`
  display: flex;
  flex-direction: column;
  align-items: center;
  gap: 12px;
  padding-top: 6px;
`;
const HBar = styled.div`
  display: flex;
  grid-column: 1;
  margin: 1px 0 0 3px;
  width: 1300px;
`;
const HTrack = styled.div`
  width: 1263px;
  height: 19px;
  flex: none;
  background: #dadada;
  display: flex;
  justify-content: flex-end;
`;
const HThumb = styled.div`
  width: 868px;
  border: 1px solid #ababab;
  background: #fff;
`;

const Arrow = ({ dir }: { dir: "u" | "d" | "l" | "r" }) => {
  const d = { u: "M0 7h9L4.500 2z", d: "M0 2h9L4.500 7z", l: "M7 0v9L2 4.500z", r: "M2 0v9L7 4.500z" }[dir];
  return <Icon width="9" height="9" viewBox="0 0 9 9"><path d={d} fill="#6a6a6a" /></Icon>;
};

const MINI: [string, number, number, number, number, number][] = [
  ["CONNECT", 64, 234, 48, 13, 1], ["LEARN", 64, 253, 48, 12, 2], ["FAVORITE", 64, 271, 48, 12, 3],
  ["Sign In", 137, 234, 47, 13, 0], ["Register", 137, 254, 47, 12, 0], ["Back", 137, 271, 47, 12, 0], ["Sign Out", 137, 288, 47, 13, 0],
];
const MINI_ICONS = [
  null,
  <path d="M1 1l5 5M6 1L1 6M3.500 0v7M0 4h7" stroke="#a9cf8f" />,
  <path d="M0 3l4.500-2L9 3L4.500 5zM2 4v2.500h5V4M8 3v4" fill="#a9cf8f" stroke="#8db672" strokeWidth=".5" />,
  <path d="M3.500 0.500l1 2.200h2.300l-1.800 1.500l0.700 2.300l-2.200-1.400l-2.200 1.400l0.700-2.300L0.200 2.700h2.300z" stroke="#9cc581" strokeWidth=".8" />,
];

function Workspace() {
  return (
    <>
      <ThumbPane>
        <ThumbNo>1</ThumbNo>
        <Thumb>
          {MINI.map(([t, x, y, w, h, ic]) => (
            <MiniBtn key={t} $x={x} $y={y} $w={w} $h={h} $left={ic > 0}>
              {ic > 0 && <Icon width="8" height="7" $mt={2} viewBox="0 0 8 7">{MINI_ICONS[ic]}</Icon>}
              {ic === 2 ? "  LEARN" : t}
            </MiniBtn>
          ))}
        </Thumb>
      </ThumbPane>
      <Center>
        <Canvas>
          <CutBtn $x={240} $y={219} $w={174}><CutLetter $ml={-9}>T</CutLetter></CutBtn>
          <CutBtn $x={240} $y={429} $w={174} />
          <CutBtn $x={240} $y={638} $w={176} $lift={3}><CutLetter $ml={-1}>E</CutLetter></CutBtn>
          <ShapeBtn $x={704} $y={219}>Sign In</ShapeBtn>
          <ShapeBtn $x={704} $y={446} $lift={1.5}>Register</ShapeBtn>
          <ShapeBtn $x={704} $y={639}>Back</ShapeBtn>
          <ShapeBtn $x={704} $y={837} $lift={2}>Sign Out</ShapeBtn>
        </Canvas>
        <VBar>
          <ArrowBtn><Arrow dir="u" /></ArrowBtn>
          <VTrack><VThumb /></VTrack>
          <ArrowBtn><Arrow dir="d" /></ArrowBtn>
          <PageArrows>
            <Icon width="9" height="10" viewBox="0 0 9 10"><path d="M0 5h9L4.500 0zM0 10h9L4.500 5z" fill="#5f5f5f" /></Icon>
            <Icon width="9" height="10" viewBox="0 0 9 10"><path d="M0 0h9L4.500 5zM0 5h9L4.500 10z" fill="#5f5f5f" /></Icon>
          </PageArrows>
        </VBar>
        <HBar>
          <ArrowBtn><Arrow dir="l" /></ArrowBtn>
          <HTrack><HThumb /></HTrack>
          <ArrowBtn><Arrow dir="r" /></ArrowBtn>
        </HBar>
      </Center>
    </>
  );
}

/* ---------- Format pane ---------- */

const Pane = styled.aside`
  flex: 1;
  padding: 12px 0 0 14px;
  color: #444;
  letter-spacing: -0.2px;
  display: flex;
  flex-direction: column;
`;
const PaneHead = styled.div`
  display: flex;
  height: 34px;
  align-items: center;
`;
const PaneTitle = styled.h1`
  margin: 0;
  width: 255px;
  font-size: 25.5px;
  font-weight: 400;
  line-height: 34px;
  letter-spacing: -0.52px;
  color: #d24726;
  white-space: nowrap;
`;
const BucketRow = styled.div`
  padding: 14px 0 0 7px;
`;
const SectionTitle = styled.div`
  display: flex;
  align-items: center;
  height: 24px;
  margin: 5px 0 7px 8px;
  font-weight: 700;
  letter-spacing: -0.6px;
  color: #d24726;
`;
const Option = styled.div<{ $h?: number }>`
  display: flex;
  align-items: center;
  height: ${(p) => p.$h ?? 29}px;
  margin-left: 27px;
`;
const Radio = styled.i<{ $on?: boolean }>`
  width: 15px;
  height: 15px;
  border-radius: 50%;
  border: 1px solid #ababab;
  background: ${(p) => (p.$on ? "radial-gradient(circle, #666 0 3.5px, #fff 4.2px)" : "#fff")};
  margin-right: 6px;
`;
const Check = styled.i`
  width: 16px;
  height: 16px;
  border: 1px solid #ababab;
  background: #fff;
  margin: 0 6px 0 -1px;
`;
const Divider = styled.hr`
  width: 275px;
  height: 1px;
  flex: none;
  border: 0;
  margin: 2px 0 9px 26px;
  background: #dcdcdc;
`;
const Field = styled.div<{ $h: number }>`
  display: flex;
  align-items: center;
  width: 265px;
  height: ${(p) => p.$h}px;
  margin-left: 36px;
`;
const ColorBtn = styled.div`
  margin-left: auto;
  width: 51px;
  height: 31px;
  border: 1px solid #ababab;
  background: #fff;
  display: flex;
  align-items: center;
  justify-content: space-between;
  padding: 0 5px 4px 11px;
`;
const SlideTrack = styled.div`
  width: 72px;
  height: 12px;
  margin: -4px 0 0 9px;
  background: linear-gradient(#a0a0a0, #a0a0a0) 0 6px / 100% 1px no-repeat;
`;
const SlideKnob = styled.div`
  width: 4px;
  height: 12px;
  background: #6a6a6a;
`;
const Spin = styled.div`
  margin-left: auto;
  width: 91px;
  height: 26px;
  border: 1px solid #ababab;
  background: #fff;
  display: flex;
  align-items: center;
  justify-content: space-between;
  padding: 0 6px;
  font-size: 12px;
`;
const Buttons = styled.div`
  margin-top: auto;
  padding-bottom: 20px;
  display: flex;
  gap: 11px;
`;
const Button = styled.div<{ $w: number; $off?: boolean }>`
  width: ${(p) => p.$w}px;
  height: 30px;
  border: 1px solid ${(p) => (p.$off ? "#dedede" : "#ababab")};
  background: #fdfdfd;
  color: ${(p) => (p.$off ? OFF : "#444")};
  text-align: center;
  line-height: 28px;
  white-space: nowrap;
`;
const WIDE_CARET = "M0 0h11L5.500 6z";

function FormatPane() {
  return (
    <Pane>
      <PaneHead>
        <PaneTitle>Format Background</PaneTitle>
        <Icon width="11" height="6" $mt={-5} viewBox="0 0 11 6"><path d={WIDE_CARET} fill="#666" /></Icon>
        <Icon width="11" height="11" $ml={41} $mt={-5} viewBox="0 0 11 11"><path d="M0.500 0.500l10 10M10.500 0.500l-10 10" stroke="#666" strokeWidth="2" /></Icon>
      </PaneHead>
      <BucketRow><Bucket color="#d24726" spill="#d24726" size={26} /></BucketRow>
      <Icon width="325" height="11" $mt={12} viewBox="0 0 325 11"><path d="M0 10.500h11l8-9l8 9h298" stroke="#c3c3c3" /></Icon>
      <SectionTitle>
        <Icon width="9" height="9" viewBox="0 0 9 9"><path d="M9 0v9H0z" fill="#444" /></Icon>
        <Txt $ml={9}>Fill</Txt>
      </SectionTitle>
      <Option><Radio $on /><Txt><u>S</u>olid fill</Txt></Option>
      <Option><Radio /><Txt><u>G</u>radient fill</Txt></Option>
      <Option><Radio /><Txt><u>P</u>icture or texture fill</Txt></Option>
      <Option><Radio /><Txt>P<u>a</u>ttern fill</Txt></Option>
      <Option $h={33}><Check /><Txt><u>H</u>ide background graphics</Txt></Option>
      <Divider />
      <Field $h={31}>
        <Txt><u>C</u>olor</Txt>
        <ColorBtn><Bucket color="#777" spill="#4080bd" size={17} /><Icon width="9" height="5" viewBox="0 0 11 6"><path d={WIDE_CARET} fill="#666" /></Icon></ColorBtn>
      </Field>
      <Field $h={38}>
        <Txt $w={87} $mt={1}><u>T</u>ransparency</Txt>
        <SlideTrack><SlideKnob /></SlideTrack>
        <Spin>0%
          <Icon width="7" height="16" viewBox="0 0 7 16"><path d="M0 4h7L3.500 0zM0 12h7L3.500 16z" fill="#666" /></Icon>
        </Spin>
      </Field>
      <Buttons>
        <Button $w={97}>App<u>l</u>y to All</Button>
        <Button $w={137} $off>Reset <u>B</u>ackground</Button>
      </Buttons>
    </Pane>
  );
}

/* ---------- Status bar ---------- */

const Status = styled.footer`
  height: 27px;
  flex: none;
  display: flex;
  align-items: center;
  background: #f3f3f3;
  font-size: 12.6px;
  letter-spacing: -0.15px;
`;
const ViewBtn = styled.div<{ $on?: boolean }>`
  width: 42px;
  height: 27px;
  flex: none;
  display: grid;
  place-items: center;
  background: ${(p) => (p.$on ? "#c8c8c8" : "none")};
`;
const Zoom = styled.div`
  width: 125px;
  height: 14px;
  flex: none;
  margin: 0 4px;
  background: linear-gradient(#a6a6a6, #a6a6a6) 0 7px / 100% 1px no-repeat;
  padding-left: 63px;
`;
const ZoomKnob = styled.div`
  width: 6px;
  height: 14px;
  background: #6a6a6a;
`;

function StatusBar() {
  const g = "#6f6f6f";
  return (
    <Status>
      <Txt $ml={6} $w={88} $ls={0.1}>Slide 1 of 1</Txt>
      <Icon width="18" height="15" viewBox="0 0 18 15">
        <path d="M12 1.500h-1L9 2.500L7 1H0.500v12H7l2 1.500l2-1.500h5V11M9 3v11" stroke={g} />
        <path d="M10.500 6l2.500 2.500L17.500 2.500" stroke={g} strokeWidth="2" />
      </Icon>
      <Txt $ml={17} $w={1308}>English (United States)</Txt>
      <Icon width="13" height="14" viewBox="0 0 13 14">
        <path d="M3 4h7L6.500 0z" fill="#444" /><path d="M0 6.500h13M0 9.500h13M0 12.500h9" stroke="#555" />
      </Icon>
      <Txt $ml={6} $w={55}>Notes</Txt>
      <ViewBtn $on>
        <Icon width="17" height="16" viewBox="0 0 17 16"><path d="M0.500 0.500h16v15h-16zM4.500 0.500v15M4.500 11.500h12M7.500 3.500h6v4h-6z" stroke={g} /></Icon>
      </ViewBtn>
      <ViewBtn>
        <Icon width="16" height="15" viewBox="0 0 16 15"><path d="M0.500 0.500h6v5h-6zM9.500 0.500h6v5h-6zM0.500 9.500h6v5h-6zM9.500 9.500h6v5h-6z" stroke={g} /></Icon>
      </ViewBtn>
      <ViewBtn>
        <Icon width="17" height="15" viewBox="0 0 17 15">
          <path d="M0.500 1.500H7l1.500 1L10 1.500h6.500v11H10l-1.500 1.500L7 12.500H0.500zM8.500 2v12M2 4.500h5M2 6.500h5M2 8.500h5M2 10.500h5M10 4.500h5M10 6.500h5M10 8.500h5M10 10.500h5" stroke={g} />
        </Icon>
      </ViewBtn>
      <ViewBtn>
        <Icon width="17" height="16" viewBox="0 0 17 16"><path d="M0 0.800h17M2.500 1v8.500h12V1M5 5h7M8.500 9.500v6M5.500 15.500h6" stroke={g} strokeWidth="1.200" /></Icon>
      </ViewBtn>
      <Icon width="10" height="3" $ml={6} viewBox="0 0 10 3"><path d="M0 1.500h10" stroke={g} strokeWidth="2" /></Icon>
      <Zoom><ZoomKnob /></Zoom>
      <Icon width="10" height="10" viewBox="0 0 10 10"><path d="M0 5h10M5 0v10" stroke={g} strokeWidth="2" /></Icon>
      <Txt $ml={13} $w={47}>117%</Txt>
      <Icon width="15" height="15" viewBox="0 0 15 15">
        <path d="M0.500 0.500h14v14h-14z" stroke={g} strokeDasharray="5 1" />
        <path d="M7.500 6V1.500M6 3l1.500-1.500L9 3M7.500 9v4.500M6 12l1.500 1.500L9 12M6 7.500H1.500M3 6L1.500 7.500L3 9M9 7.500h4.500M12 6l1.500 1.500L12 9" stroke={g} />
      </Icon>
    </Status>
  );
}

/* ---------- Taskbar ---------- */

const Taskbar = styled.div`
  height: 50px;
  flex: none;
  background: #080708;
  display: flex;
  color: #fff;
`;
const Start = styled.div`
  width: 60px;
  display: grid;
  place-items: center;
`;
const Search = styled.div`
  width: 430px;
  background: #333;
  display: flex;
  align-items: center;
  padding: 0 18px 0 11px;
`;
const Ring = styled.i`
  width: 28px;
  height: 28px;
  border: 3.5px solid #fff;
  border-radius: 50%;
  box-shadow: inset 0 0 1px #fff;
`;
const SearchText = styled.span`
  flex: 1;
  margin-left: 11px;
  font-size: 17.2px;
  letter-spacing: -0.3px;
  color: #a8a8a8;
`;
const TaskBtn = styled.div<{ $w?: number; $mode?: "run" | "multi" | "active" }>`
  width: ${(p) => p.$w ?? 62}px;
  height: 50px;
  flex: none;
  display: grid;
  place-items: center;
  position: relative;
  background-repeat: no-repeat;
  ${(p) => p.$mode === "run" && css`background-image: linear-gradient(#b4b4b4, #b4b4b4); background-size: 51px 3px; background-position: 6px 47px;`}
  ${(p) => p.$mode === "multi" && css`background-image: linear-gradient(90deg, #b4b4b4 40px, #555 40px, #8a8a8a 41px); background-size: 51px 3px; background-position: 6px 47px;`}
  ${(p) => p.$mode === "active" && css`background-image: linear-gradient(#b4b4b4, #b4b4b4), linear-gradient(#424142, #424142); background-size: 61px 3px, 61px 50px; background-position: 0 47px, 0 0;`}
`;
const Badge = styled.span`
  position: absolute;
  left: 36px;
  top: 24px;
  width: 21px;
  height: 21px;
  border-radius: 50%;
  border: 1px solid #777;
  background: rgba(45, 45, 45, 0.88);
  text-align: center;
  font-size: 13.5px;
  font-weight: 600;
  line-height: 19px;
  letter-spacing: 0;
`;
const Tray = styled.div`
  margin-left: auto;
  display: flex;
  align-items: center;
`;
const Clock = styled.div`
  width: 90px;
  margin-left: 1px;
  text-align: center;
  line-height: 23px;
  padding-bottom: 1px;
  letter-spacing: -0.1px;
`;
const Action = styled.div`
  position: relative;
  width: 58px;
  height: 50px;
  padding: 15px 0 0 12px;
  border-right: 1px solid #777;
  margin-right: 5px;
  ${Badge} { left: 21px; top: 24px; }
`;

function Bar() {
  return (
    <Taskbar>
      <Start>
        <Icon width="20" height="20" viewBox="0 0 20 20"><path d="M0 3l8-1.200V9.500H0zM9 1.600L20 0v9.500H9zM0 10.500h8v7.700L0 17zM9 10.500h11V20L9 18.400z" fill="#fff" /></Icon>
      </Start>
      <Search>
        <Ring />
        <SearchText>Type here to search</SearchText>
        <Icon width="14" height="20" viewBox="0 0 14 20">
          <rect x="4" y="1" width="6" height="12" rx="1" stroke="#a5a5a5" strokeWidth="1.600" />
          <path d="M1 10v5h2l1.500 1.500h5L11 15h2v-5M7 16.500V19M4 19.200h6" stroke="#a5a5a5" strokeWidth="1.400" />
        </Icon>
      </Search>
      <TaskBtn $w={63}>
        <Icon $ml={-3} width="24" height="18" viewBox="0 0 24 18"><path d="M4.500 0.500h15v17h-15zM3 3.500H0.500v11H3M21 3.500h2.500v11H21" stroke="#fff" strokeWidth="1.100" /></Icon>
      </TaskBtn>
      <TaskBtn $mode="multi">
        <Icon width="28" height="24" viewBox="0 0 28 24">
          <path d="M0 2q0-1.500 1.500-1.500H11l2 2.500H27v20H0z" fill="#f5c943" /><path d="M0 4.500h10l2-1.500h15.500v20H0z" fill="#ffe594" />
          <path d="M5 24V13.500q0-1.500 1.500-1.500h15q1.500 0 1.500 1.500V24h-4.500v-6h-9v6z" fill="#3bb2e5" />
        </Icon>
      </TaskBtn>
      <TaskBtn>
        <Icon width="28" height="28" viewBox="0 0 28 28">
          <path d="M5.500 8.500A10.500 10.500 0 0 0 6.500 21M17 3.800a10.500 10.500 0 0 1 6.500 6M23 19a10.500 10.500 0 0 1-7 5.500" stroke="#565d61" strokeWidth="1.900" />
          <path d="M10 5l4-5l1.500 6zM1 14l5-1.500v3zM28 14l-5-2.500v4zM15 28l-4.500-4.500h5z" fill="#6d7478" />
          <path d="M14 6.500c4 0 6 3 5.500 7S16 21.500 14 21.500S9 17.500 8.500 13.500S10 6.500 14 6.500z" fill="#c9cbcd" />
          <path d="M10 14l3 3.500M18 14l-3 3.500" stroke="#333" strokeWidth="1.500" />
        </Icon>
      </TaskBtn>
      <TaskBtn $mode="run">
        <Icon width="30" height="24" viewBox="0 0 30 24">
          <path d="M0 7.500L15 0l15 7.500V24H0z" fill="#fff" />
          <path d="M3.500 7.500H30L15 14z" fill="#080708" />
          <path d="M15 14l5-2.500L27 22z" fill="#080708" />
        </Icon>
        <Badge>1</Badge>
      </TaskBtn>
      <TaskBtn $mode="multi">
        <Icon width="28" height="28" viewBox="0 0 28 28">
          <circle cx="14" cy="14" r="14" fill="#fdc83a" />
          <path d="M14 14L1.900 7A14 14 0 0 1 26.100 7H14z" fill="#dc4437" />
          <path d="M1.900 7A14 14 0 0 0 13 28l6-10.500L8 17.500z" fill="#1b9f58" />
          <path d="M26.100 7H14l5.500 10.500L13 28A14 14 0 0 0 26.100 7z" fill="#fdc83a" />
          <circle cx="14" cy="14" r="6.300" fill="#f1f1f1" /><circle cx="14" cy="14" r="5.100" fill="#4688f1" />
        </Icon>
      </TaskBtn>
      <TaskBtn $mode="run">
        <Icon width="23" height="23" viewBox="0 0 23 23"><path d="M0 0h23v23H0z" fill="#fff" /><path d="M22 13L12.500 22.500V13z" fill="#060606" /></Icon>
      </TaskBtn>
      <TaskBtn $mode="run">
        <Icon width="26" height="28" viewBox="0 0 26 28">
          <circle cx="13" cy="13" r="13" fill="#83b844" />
          <path d="M13 10L4 27M13 10l9 17M5 17c5 3 11 3 15-4" stroke="#eee" strokeWidth="2.600" />
          <circle cx="13" cy="9.500" r="4" fill="#50565a" /><circle cx="13" cy="9.500" r="1.600" fill="#83b844" />
        </Icon>
      </TaskBtn>
      <TaskBtn $mode="active">
        <Icon width="28" height="28" viewBox="0 0 28 28">
          <path d="M15 4h12.500v20H15z" fill="#fff" stroke="#d24726" /><path d="M17 8.500a3.500 3.500 0 1 0 6 3h-3.500V8z" fill="#d24726" /><path d="M21 6.500v3.500h3.500A4 4 0 0 0 21 6.500zM17 17h8v1.500h-8zM17 20.500h8V22h-8z" fill="#d24726" />
          <path d="M0 3l17-3v28L0 25z" fill="#d24726" /><text x="3.500" y="19.500" fontSize="15.500" fontWeight="700" fill="#fff">P</text>
        </Icon>
      </TaskBtn>
      <TaskBtn $mode="run">
        <Icon width="28" height="28" viewBox="0 0 28 28">
          <circle cx="14" cy="14" r="13.500" fill="#7b2f96" stroke="#e5d5ea" />
          <path d="M7 7l4 1.800q3-0.600 6 0L21 7q1 2 0.500 4q1.800 3 0.500 6q-1.500 3-5 3.200V27.300q-3 .7-6 0V24q-4 .5-5-3l-1.500-1.500q2-.5 3 1.500q1.500 1.500 3.500.5l.5-1.500q-4-.5-5-3.500q-1-3 .8-5.500Q6 9 7 7z" fill="#f1e9f4" />
        </Icon>
      </TaskBtn>
      <Tray>
        <Icon width="18" height="20" viewBox="0 0 18 20" stroke="#fff" strokeWidth="1.500">
          <circle cx="12.500" cy="4.500" r="3.500" /><circle cx="5.500" cy="11" r="3" /><path d="M9 11c1-3 7-3.500 8.500 1M1 19.500c0-6 8-6 8.500 0" />
        </Icon>
        <Icon $ml={28} width="16" height="9" viewBox="0 0 16 9"><path d="M0.500 8.500L8 1l7.500 7.500" stroke="#fff" strokeWidth="1.400" /></Icon>
        <Icon $ml={12} width="20" height="12" viewBox="0 0 20 12">
          <path d="M4 12A4 4 0 0 1 3 5Q4 2 7 2.500Q10-1.500 14 2l-5 3.500L6 12z" fill="#fff" /><path d="M9 12a3.500 3.500 0 0 1 0-6q3-4 7-1q4 .5 4 4q0 3-3 3z" fill="#fff" stroke="#080708" strokeWidth=".7" />
        </Icon>
        <Icon $ml={11} width="19" height="11" viewBox="0 0 19 11"><path d="M0.600 0.600h16.300v9.800H0.600z" stroke="#fff" strokeWidth="1.200" /><path d="M2.500 2.500h12.500v6H2.500zM17.500 3.500H19v4h-1.500z" fill="#fff" /></Icon>
        <Icon $ml={10} width="20" height="17" viewBox="0 0 20 17">
          <path d="M0.600 5.500h2.500L7 1.500v14L3 11.500H0.600z" stroke="#fff" strokeWidth="1.200" /><path d="M9.500 6q1.500 2.500 0 5" stroke="#fff" strokeWidth="1.300" /><path d="M12.500 3.500q3.500 5 0 10M15.500 1q5 7.500 0 15" stroke="#777" strokeWidth="1.300" />
        </Icon>
        <Clock>9:35 PM<br />3/24/2018</Clock>
        <Action>
          <Icon width="20" height="20" viewBox="0 0 20 20"><path d="M0 0h20v15h-5v5l-5-5H0z" fill="#fff" /><path d="M4 4.500h12M4 7.500h12M4 10.500h12" stroke="#080708" /></Icon>
          <Badge>8</Badge>
        </Action>
      </Tray>
    </Taskbar>
  );
}

export default function App() {
  return (
    <Window>
      <Global />
      <Top />
      <RibbonBar>
        <Clipboard />
        <Slides />
        <FontGroup />
        <Paragraph />
        <Drawing />
        <Editing />
        <CollapseCell>
          <Icon width="11" height="7" viewBox="0 0 11 7"><path d="M0.700 6.500l4.800-5l4.800 5" stroke="#666" strokeWidth="1.800" /></Icon>
        </CollapseCell>
      </RibbonBar>
      <Work>
        <Workspace />
        <FormatPane />
      </Work>
      <StatusBar />
      <Bar />
    </Window>
  );
}
